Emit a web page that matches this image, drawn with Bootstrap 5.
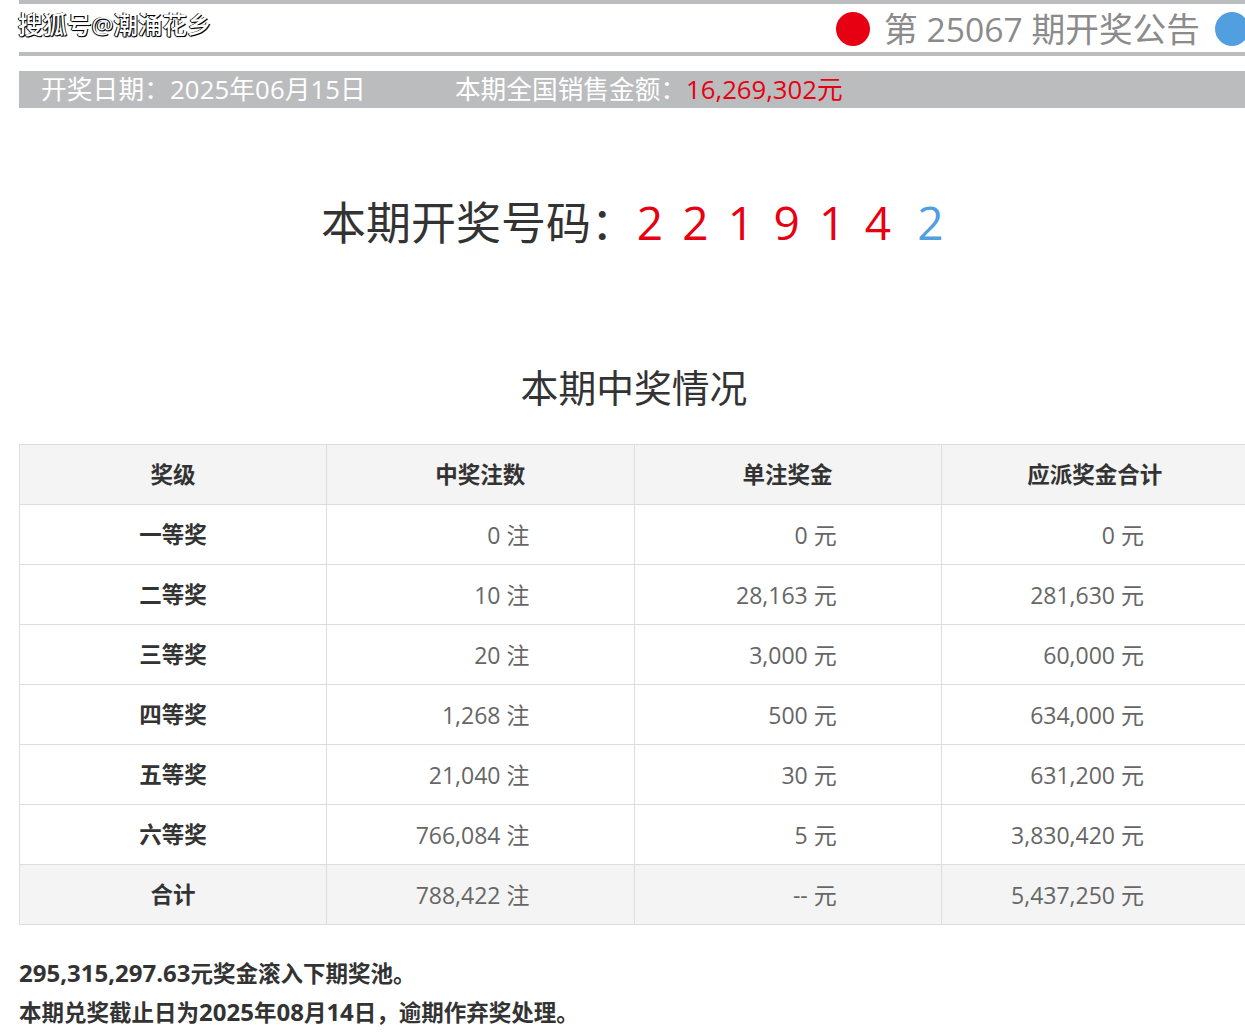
<!DOCTYPE html>
<html lang="zh">
<head>
<meta charset="utf-8">
<title>开奖公告</title>
<link href="https://cdn.jsdelivr.net/npm/bootstrap@5.3.0/dist/css/bootstrap.min.css" rel="stylesheet">
<style>
html,body{margin:0;background:#fff;overflow:hidden}
body{font-family:"Open Sans","Noto Sans CJK SC",sans-serif;color:#333;height:1036px}
.sheet{width:1230px;margin-left:19px;position:relative}
.notice-head{border-top:4px solid #bbbcbe;border-bottom:4px solid #bbbcbe;height:56px;padding-top:2px}
.dot{width:34px;height:34px;border-radius:50%;flex:none}
.dot-red{background:#e60012}
.dot-blue{background:#529fe0}
.issue{font-size:33.7px;line-height:44px;color:#8b8b8b;margin:0 15px 0 14px;white-space:nowrap}
.watermark{position:absolute;left:-1px;top:9px;font-size:24.5px;line-height:32px;color:#fff;font-weight:500;text-shadow:1px 1px 0 #000,-1px 0 0 #000,0 1px 1px #000;white-space:nowrap}
.info-bar{margin-top:15px;height:37px;background:#bbbcbe;color:#fff;font-size:25.7px;line-height:38px;padding-left:22px;white-space:nowrap}
.info-date{letter-spacing:.12px}
.info-sale{margin-left:89px}
.txt-red{color:#e60012}
.draw-line{margin-top:85px;height:58px;font-size:45px;line-height:58px;white-space:nowrap;padding-left:302px;color:#333}
.ball-set{margin-left:-9px;font-size:46px}
.ball{display:inline-block;width:45.6px;text-align:center;color:#e60012}
.ball-blue{color:#529fe0;margin-left:7px}
.sect-title{margin-top:107px;height:58px;padding-top:1px;font-size:37.8px;line-height:58px;text-align:center;color:#333;font-weight:400;margin-bottom:28px}
.prize-table{width:1230px;table-layout:fixed;border-collapse:collapse;margin:0}
.prize-table th,.prize-table td{height:60px;padding:0;border:1px solid #ddd;font-size:22.5px;line-height:30px;vertical-align:middle;background:transparent;box-shadow:none}
.prize-table th{text-align:center;font-weight:700;color:#333}
.prize-table td{text-align:right;padding-right:104px;color:#666;font-weight:400;font-size:23px}
.row-shade th,.row-shade td{background:#f4f4f4}
.notes{margin-top:29px;font-size:22.5px;line-height:38px;font-weight:700;color:#333;white-space:nowrap}
.fig{font-size:24px}
</style>
</head>
<body>
<div class="sheet">
  <div class="notice-head d-flex align-items-center justify-content-end">
    <span class="dot dot-red"></span>
    <span class="issue">第 25067 期开奖公告</span>
    <span class="dot dot-blue"></span>
  </div>
  <div class="watermark">搜狐号@潮涌花乡</div>
  <div class="info-bar"><span class="info-date">开奖日期：2025年06月15日</span><span class="info-sale">本期全国销售金额：<span class="txt-red">16,269,302元</span></span></div>
  <div class="draw-line">本期开奖号码：<span class="ball-set"><span class="ball">2</span><span class="ball">2</span><span class="ball">1</span><span class="ball">9</span><span class="ball">1</span><span class="ball">4</span><span class="ball ball-blue">2</span></span></div>
  <h2 class="sect-title">本期中奖情况</h2>
  <table class="table prize-table">
    <tbody>
      <tr class="row-shade"><th>奖级</th><th>中奖注数</th><th>单注奖金</th><th>应派奖金合计</th></tr>
      <tr><th>一等奖</th><td>0 注</td><td>0 元</td><td>0 元</td></tr>
      <tr><th>二等奖</th><td>10 注</td><td>28,163 元</td><td>281,630 元</td></tr>
      <tr><th>三等奖</th><td>20 注</td><td>3,000 元</td><td>60,000 元</td></tr>
      <tr><th>四等奖</th><td>1,268 注</td><td>500 元</td><td>634,000 元</td></tr>
      <tr><th>五等奖</th><td>21,040 注</td><td>30 元</td><td>631,200 元</td></tr>
      <tr><th>六等奖</th><td>766,084 注</td><td>5 元</td><td>3,830,420 元</td></tr>
      <tr class="row-shade"><th>合计</th><td>788,422 注</td><td>-- 元</td><td>5,437,250 元</td></tr>
    </tbody>
  </table>
  <div class="notes"><span class="fig">295,315,297.63</span>元奖金滚入下期奖池。<br>本期兑奖截止日为<span class="fig">2025</span>年<span class="fig">08</span>月<span class="fig">14</span>日，逾期作弃奖处理。</div>
</div>
<script src="https://cdn.jsdelivr.net/npm/bootstrap@5.3.0/dist/js/bootstrap.bundle.min.js"></script>
</body>
</html>
